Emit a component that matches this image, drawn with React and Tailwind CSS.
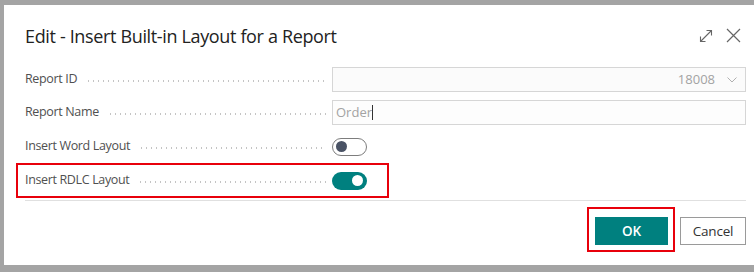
import React from 'react';

const font = { fontFamily: '"Open Sans", "Noto Sans", sans-serif' };

const Leader = () => (
  <div className="flex-1 h-[2px] ml-[9px] mr-[6px] mt-[3px] bg-[radial-gradient(circle,#c4c4c4_0.7px,transparent_1.1px)] bg-[length:5px_2px] bg-repeat-x" />
);

const Field = ({ label, children }) => (
  <div className="flex items-center">
    <div className="flex items-center w-[307px]">
      <span className="text-[12.5px] tracking-[-0.35px] text-[#505050] whitespace-nowrap">{label}</span>
      <Leader />
    </div>
    <div className="flex-1 flex items-center">{children}</div>
  </div>
);

const Toggle = ({ on }) =>
  on ? (
    <div className="w-[35px] h-[18px] rounded-full bg-[#00807f] flex items-center justify-end pr-[4px]">
      <div className="w-[11px] h-[11px] rounded-full bg-white" />
    </div>
  ) : (
    <div className="w-[35px] h-[18px] rounded-full border-[1.5px] border-[#7d7d7d] bg-white flex items-center pl-[3px]">
      <div className="w-[11px] h-[11px] rounded-full bg-[#4a5365]" />
    </div>
  );

export default function App() {
  return (
    <div className="w-[754px] h-[272px] overflow-hidden bg-[#a4a4a4] pt-[5px] pl-[4px]" style={font}>
      <div className="h-[260px] bg-white pl-[21px] pr-[8px]">
        <div className="flex items-center justify-between pt-[14px] h-[47px]">
          <h1 className="text-[18px] tracking-[-0.35px] leading-[28px] text-[#222]">Edit - Insert Built-in Layout for a Report</h1>
          <div className="flex items-center gap-[13px] pr-[5px] text-[#666]">
            <svg width="14" height="14" viewBox="0 0 14 14" fill="none" stroke="currentColor" strokeWidth="1.1">
              <path d="M1.5 12.5 L12.5 1.5" />
              <path d="M7.5 1.5 H12.5 V6.5" />
              <path d="M1.5 7.5 V12.5 H6.5" />
            </svg>
            <svg width="15" height="15" viewBox="0 0 15 15" fill="none" stroke="currentColor" strokeWidth="1.2">
              <path d="M1 1 L14 14 M14 1 L1 14" />
            </svg>
          </div>
        </div>

        <div className="mt-[15px] flex flex-col">
          <Field label="Report ID">
            <div className="w-full h-[25px] border border-[#d6d6d6] bg-[#fbfbfb] flex items-center justify-end pr-[8px] gap-[12px]">
              <span className="text-[13px] text-[#a3a3a3]">18008</span>
              <svg width="10" height="6" viewBox="0 0 10 6" fill="none" stroke="#b0b0b0" strokeWidth="1">
                <path d="M0.5 0.5 L5 5 L9.5 0.5" />
              </svg>
            </div>
          </Field>
          <div className="mt-[8px]">
            <Field label="Report Name">
              <div className="w-full h-[25px] border border-[#d6d6d6] bg-[#fdfdfd] flex items-center pl-[3px]">
                <span className="text-[13px] text-[#a3a3a3]">Order</span>
                <span className="w-px h-[15px] bg-[#333]" />
              </div>
            </Field>
          </div>
          <div className="mt-[9px] h-[25px]">
            <Field label="Insert Word Layout">
              <div className="h-[25px] flex items-center">
                <Toggle on={false} />
              </div>
            </Field>
          </div>
          <div className="relative mt-[9px] h-[25px]">
            <Field label="Insert RDLC Layout">
              <div className="h-[25px] flex items-center">
                <Toggle on />
              </div>
            </Field>
            <div className="absolute left-[-9px] top-[-5px] w-[373px] h-[35px] border-2 border-[#e8000b]" />
          </div>
        </div>

        <div className="mt-[7px] h-px bg-[#e0e0e0]" />

        <div className="flex justify-end gap-[12px] mt-[16px]">
          <div className="relative">
            <button className="w-[73px] h-[28px] bg-[#00807f] text-white text-[13.5px] font-semibold">OK</button>
            <div className="absolute left-[-8px] top-[-10px] right-[-7px] bottom-[-7px] border-2 border-[#e8000b]" />
          </div>
          <button className="w-[66px] h-[28px] bg-white border border-[#9a9a9a] text-[13.5px] tracking-[-0.2px] text-[#333]">Cancel</button>
        </div>
      </div>
    </div>
  );
}
